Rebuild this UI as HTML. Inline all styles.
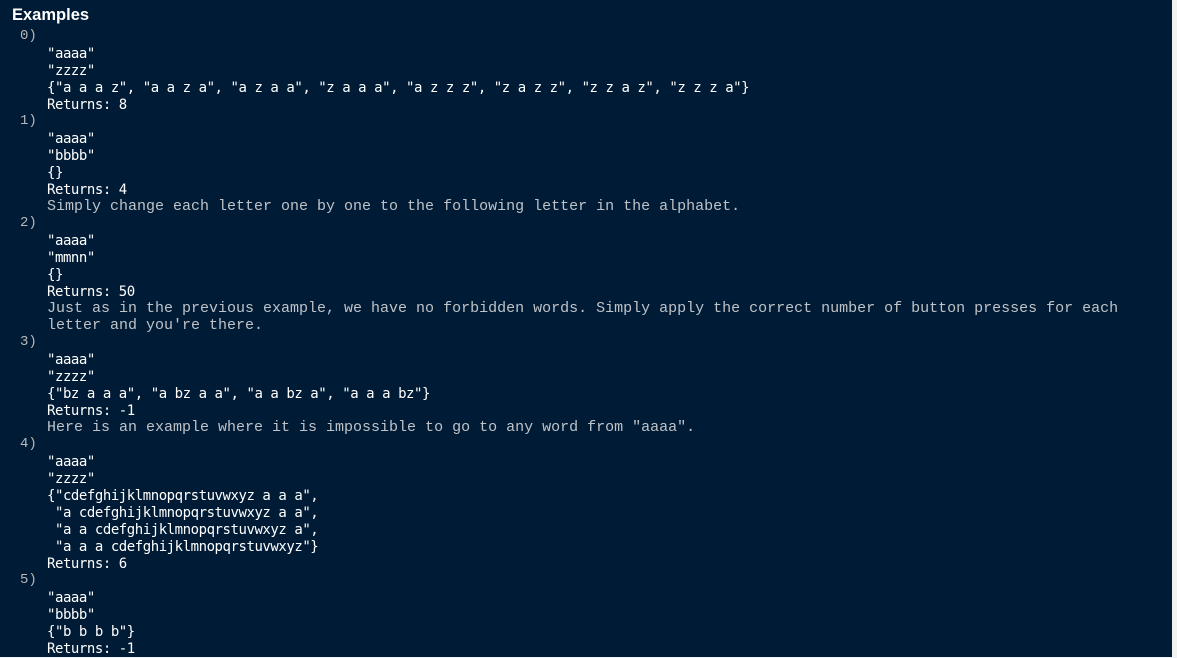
<!DOCTYPE html>
<html><head><meta charset="utf-8"><style>
html,body{margin:0;padding:0}
body{width:1177px;height:657px;background:#f2f2f2;overflow:hidden;position:relative}
#m{position:absolute;left:0;top:0;width:1172px;height:657px;background:#001b35}
h3{position:absolute;left:12px;top:6px;margin:0;font:bold 16.5px "Liberation Sans",sans-serif;color:#fff}
.l{position:absolute;white-space:pre;line-height:17px;height:17px}
.i{left:20px;font:14px "Liberation Mono",monospace;color:#b8b8b8}
.d{left:47px;font:14px "DejaVu Sans Mono",monospace;letter-spacing:-0.45px;color:#fff;margin-top:1px}
.n{left:47px;font:15px "Liberation Mono",monospace;color:#bfc3c8}
</style></head><body><div id="m">
<h3>Examples</h3>
<div class="l i" style="top:28px">0)</div>
<div class="l d" style="top:45px">"aaaa"</div>
<div class="l d" style="top:62px">"zzzz"</div>
<div class="l d" style="top:79px">{"a a a z", "a a z a", "a z a a", "z a a a", "a z z z", "z a z z", "z z a z", "z z z a"}</div>
<div class="l d" style="top:96px">Returns: 8</div>
<div class="l i" style="top:113px">1)</div>
<div class="l d" style="top:130px">"aaaa"</div>
<div class="l d" style="top:147px">"bbbb"</div>
<div class="l d" style="top:164px">{}</div>
<div class="l d" style="top:181px">Returns: 4</div>
<div class="l n" style="top:198px">Simply change each letter one by one to the following letter in the alphabet.</div>
<div class="l i" style="top:215px">2)</div>
<div class="l d" style="top:232px">"aaaa"</div>
<div class="l d" style="top:249px">"mmnn"</div>
<div class="l d" style="top:266px">{}</div>
<div class="l d" style="top:283px">Returns: 50</div>
<div class="l n" style="top:300px">Just as in the previous example, we have no forbidden words. Simply apply the correct number of button presses for each</div>
<div class="l n" style="top:317px">letter and you're there.</div>
<div class="l i" style="top:334px">3)</div>
<div class="l d" style="top:351px">"aaaa"</div>
<div class="l d" style="top:368px">"zzzz"</div>
<div class="l d" style="top:385px">{"bz a a a", "a bz a a", "a a bz a", "a a a bz"}</div>
<div class="l d" style="top:402px">Returns: -1</div>
<div class="l n" style="top:419px">Here is an example where it is impossible to go to any word from "aaaa".</div>
<div class="l i" style="top:436px">4)</div>
<div class="l d" style="top:453px">"aaaa"</div>
<div class="l d" style="top:470px">"zzzz"</div>
<div class="l d" style="top:487px">{"cdefghijklmnopqrstuvwxyz a a a",</div>
<div class="l d" style="top:504px"> "a cdefghijklmnopqrstuvwxyz a a",</div>
<div class="l d" style="top:521px"> "a a cdefghijklmnopqrstuvwxyz a",</div>
<div class="l d" style="top:538px"> "a a a cdefghijklmnopqrstuvwxyz"}</div>
<div class="l d" style="top:555px">Returns: 6</div>
<div class="l i" style="top:572px">5)</div>
<div class="l d" style="top:589px">"aaaa"</div>
<div class="l d" style="top:606px">"bbbb"</div>
<div class="l d" style="top:623px">{"b b b b"}</div>
<div class="l d" style="top:640px">Returns: -1</div>
</div></body></html>
